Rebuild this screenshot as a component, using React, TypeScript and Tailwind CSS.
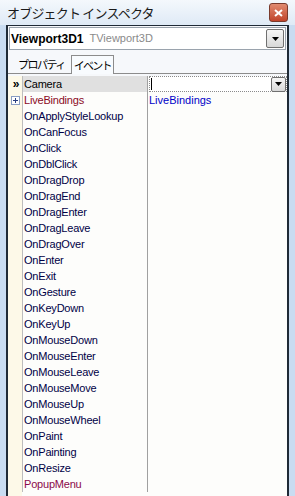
import React from "react";

const EVENTS = [
  "OnApplyStyleLookup",
  "OnCanFocus",
  "OnClick",
  "OnDblClick",
  "OnDragDrop",
  "OnDragEnd",
  "OnDragEnter",
  "OnDragLeave",
  "OnDragOver",
  "OnEnter",
  "OnExit",
  "OnGesture",
  "OnKeyDown",
  "OnKeyUp",
  "OnMouseDown",
  "OnMouseEnter",
  "OnMouseLeave",
  "OnMouseMove",
  "OnMouseUp",
  "OnMouseWheel",
  "OnPaint",
  "OnPainting",
  "OnResize",
];

const jp = { fontFamily: '"Noto Sans CJK JP", "Noto Sans", sans-serif' };

function DropButton({ className = "" }: { className?: string }) {
  return (
    <div
      className={`flex items-center justify-center rounded-[2px] border border-[#707070] bg-gradient-to-b from-[#f6f6f6] to-[#d8d8d8] ${className}`}
    >
      <svg width="7" height="4" viewBox="0 0 7 4">
        <path d="M0 0h7L3.5 4z" fill="#000" />
      </svg>
    </div>
  );
}

function Row({
  name,
  nameClass = "text-[#000046]",
  selected = false,
  gutter,
  value,
}: {
  name: string;
  nameClass?: string;
  selected?: boolean;
  gutter?: React.ReactNode;
  value?: React.ReactNode;
}) {
  return (
    <div className="flex h-[16px]">
      <div className="flex w-[14px] items-center justify-center bg-[#fdf9e8]">{gutter}</div>
      <div
        className={`flex w-[125px] items-center border-l border-[#bdbdbd] pl-[1px] tracking-[-0.2px] ${nameClass} ${
          selected ? "bg-[#e0e0e0]" : ""
        }`}
      >
        {name}
      </div>
      <div className="w-[1px] bg-[#a0a0a0]" />
      <div className="flex flex-1 items-center pl-[1px]">{value}</div>
    </div>
  );
}

export default function App() {
  return (
    <div
      className="flex h-[496px] w-[295px] flex-col bg-[#c9dcf1] text-[11px]"
      style={{ fontFamily: '"Liberation Sans", Arial, sans-serif' }}
    >
      {/* Title bar */}
      <div className="flex h-[27px] items-center justify-between bg-gradient-to-b from-[#f4f8fc] to-[#dfeaf6] pl-[7px] pr-[7px]">
        <span className="text-[13px] tracking-[-0.8px] text-[#1a1a1a]" style={jp}>
          オブジェクト インスペクタ
        </span>
        <div className="flex h-[19px] w-[19px] items-center justify-center rounded-[3px] border border-[#7a3a2c] bg-gradient-to-b from-[#e08a70] to-[#c0432a]">
          <svg width="9" height="8" viewBox="0 0 9 8">
            <path d="M1 1l7 6M8 1L1 7" stroke="#fff" strokeWidth="2" />
          </svg>
        </div>
      </div>

      {/* Body */}
      <div className="mx-[6px] flex flex-1 flex-col border-x-2 border-t border-[#1f2a36] bg-[#f6f8fb]">
        {/* Component selector */}
        <div className="mx-[1px] mt-[1px] flex h-[23px] items-center border border-[#9aa3ad] bg-white pl-[1px] pr-[1px]">
          <span className="font-bold text-[12px] text-black">Viewport3D1</span>
          <span className="ml-[6px] text-[11px] text-[#8a8a8a]">TViewport3D</span>
          <div className="flex-1" />
          <DropButton className="h-[19px] w-[18px]" />
        </div>

        {/* Tabs */}
        <div className="mt-[4px] flex h-[20px] items-end border-b border-[#8c8c8c] pl-[7px]">
          <div className="mb-[1px] px-[3px] text-[11px] tracking-[-1.5px] text-black" style={jp}>
            プロパティ
          </div>
          <div
            className="-mb-[1px] ml-[3px] h-[19px] border border-b-0 border-[#8c8c8c] bg-[#f8fbfe] px-[2px] text-[11px] leading-[18px] tracking-[-1.8px] text-black"
            style={jp}
          >
            イベント
          </div>
        </div>

        {/* Grid */}
        <div className="mt-[2px] flex flex-1 flex-col bg-[#fdfdfb]">
          <Row
            name="Camera"
            nameClass="text-black"
            selected
            gutter={<span className="text-[12px] font-bold leading-none tracking-[-2px]">»</span>}
            value={
              <div className="flex h-[16px] flex-1 items-center border border-dotted border-[#8a8a8a] bg-white">
                <div className="ml-[1px] h-[12px] w-[1px] bg-black" />
                <div className="flex-1" />
                <DropButton className="h-[15px] w-[15px]" />
              </div>
            }
          />
          <Row
            name="LiveBindings"
            nameClass="text-[#8b0a1e]"
            gutter={
              <div className="flex h-[9px] w-[9px] items-center justify-center border border-[#8a9ec4] bg-white">
                <svg width="5" height="5" viewBox="0 0 5 5">
                  <path d="M0 2.5h5M2.5 0v5" stroke="#2a3f80" strokeWidth="1" />
                </svg>
              </div>
            }
            value={<span className="text-[#0000c8]">LiveBindings</span>}
          />
          {EVENTS.map((e) => (
            <Row key={e} name={e} />
          ))}
          <Row name="PopupMenu" nameClass="text-[#8b0a4a]" />
          <div className="flex flex-1">
            <div className="w-[14px] bg-[#fdf9e8]" />
            <div className="w-[126px]" />
            <div className="mb-[4px] w-[1px] bg-[#a0a0a0]" />
          </div>
        </div>
      </div>
    </div>
  );
}
